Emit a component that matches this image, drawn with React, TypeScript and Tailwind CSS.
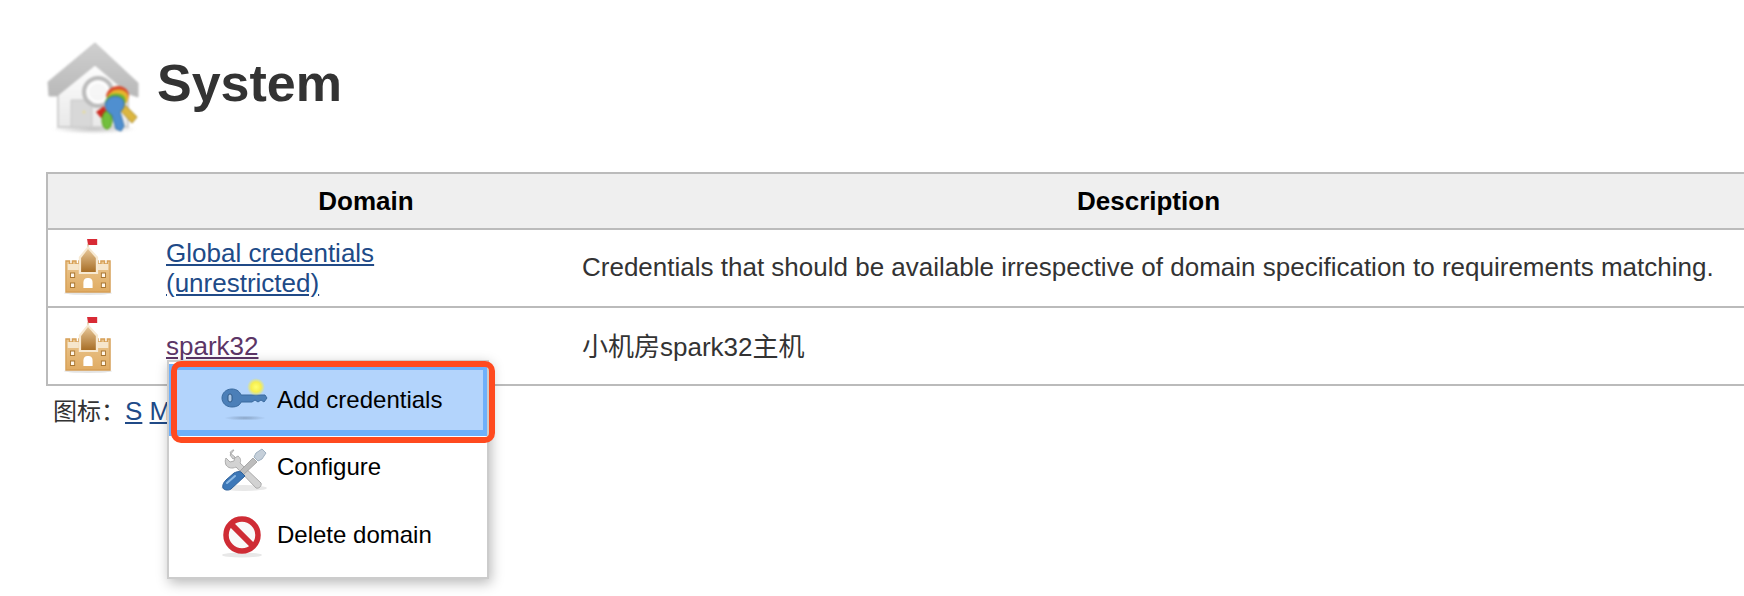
const font = "font-['Liberation_Sans','Noto_Sans_CJK_SC',sans-serif]";

function HouseIcon() {
  return (
    <svg width="100" height="100" viewBox="0 0 100 100" className="shrink-0 blur-[0.8px]">
      <defs>
        <linearGradient id="wall" x1="0" y1="0" x2="0" y2="1">
          <stop offset="0" stopColor="#ffffff" />
          <stop offset="1" stopColor="#e9e9e9" />
        </linearGradient>
        <linearGradient id="roof" x1="0" y1="0" x2="0" y2="1">
          <stop offset="0" stopColor="#cfcfcf" />
          <stop offset="1" stopColor="#b9b9b9" />
        </linearGradient>
        <radialGradient id="shadow">
          <stop offset="0" stopColor="#999" stopOpacity="0.6" />
          <stop offset="1" stopColor="#999" stopOpacity="0" />
        </radialGradient>
      </defs>
      <ellipse cx="50" cy="91" rx="42" ry="5" fill="url(#shadow)" />
      <path d="M14 46 L51 22 L84 46 V89 H14 Z" fill="url(#wall)" stroke="#d0d0d0" strokeWidth="2" />
      <path d="M4 44 L51 5 L94 45 V59 L85 56 L51 27 L13 58 L5 58 Z" fill="url(#roof)" stroke="#bdbdbd" strokeWidth="1" strokeLinejoin="round" />
      <path d="M27 62 H48 V89 H27 Z" fill="#d8d8d8" stroke="#c8c8c8" />
      <circle cx="40" cy="74" r="1.6" fill="#e6dc9e" />
      <circle cx="54" cy="54" r="14" fill="#f6f6f6" fillOpacity="0.6" stroke="#bbbbbb" strokeWidth="4" />
      <circle cx="54" cy="54" r="10" fill="none" stroke="#ffffff" strokeWidth="2" />
      <path d="M52 74 L60 68 L64 76 L57 80 Z" fill="#cc2a20" />
      <path d="M80 66 L93 79 L88 85 L76 72 Z" fill="#dcb63f" stroke="#a88a2a" strokeWidth="1" />
      <ellipse cx="63" cy="82" rx="5" ry="9" fill="#72bf3c" stroke="#4e9a06" strokeWidth="1" />
      <path d="M62 58 C63 49 76 44 83 52 C87 57 84 64 79 66 L66 66 Z" fill="#d94b2e" />
      <path d="M63 60 C65 52 76 48 83 55 C86 60 83 66 79 68 L66 68 Z" fill="#e8b52e" />
      <path d="M61 64 C63 56 72 53 80 58 C83 62 81 68 77 70 L65 72 Z" fill="#6cb92f" />
      <path d="M62 64 C66 56 78 57 80 64 C81 69 78 72 76 74 L80 88 L77 93 L72 91 L68 77 C63 74 60 69 62 64 Z" fill="#4f8fd0" stroke="#336fa8" strokeWidth="1" />
    </svg>
  );
}

function CastleIcon() {
  return (
    <svg width="60" height="60" viewBox="0 0 60 60" className="blur-[0.7px]">
      <defs>
        <linearGradient id="tower" x1="0" y1="0" x2="0" y2="1">
          <stop offset="0" stopColor="#e6c596" />
          <stop offset="1" stopColor="#a86f28" />
        </linearGradient>
        <linearGradient id="body" x1="0" y1="0" x2="0" y2="1">
          <stop offset="0" stopColor="#eac68f" />
          <stop offset="1" stopColor="#e0ab62" />
        </linearGradient>
      </defs>
      <ellipse cx="30" cy="57" rx="24" ry="2" fill="#e4e4e4" />
      <g transform="translate(2.4 0) scale(0.92 1)">
        <path d="M29 3 H40 V9 H30 Z" fill="#d82a35" />
        <path d="M30 8 V12" stroke="#c9a272" strokeWidth="1" />
        <path d="M6 25 H10 V28 H13 V25 H17 V28 H20 V25 H22 V36 H38 V25 H41 V28 H44 V25 H48 V28 H51 V25 H54 V56 H6 Z" fill="url(#body)" stroke="#d69f56" strokeWidth="1.4" />
        <path d="M8 28 H20 V34 H8 Z M40 28 H52 V34 H40 Z" fill="#f6e6cc" />
        <path d="M30 10 L41 21 V38 H20 V21 Z" fill="#f7e9d2" />
        <path d="M30 13 L38.5 22 V36 H22.5 V22 Z" fill="url(#tower)" />
        <path d="M25 52 V47 C25 43 27 42 30 42 C33 42 35 43 35 47 V52 Z" fill="#fff" />
        <rect x="11" y="37" width="4.5" height="4.5" fill="#fff6e8" stroke="#a87530" />
        <rect x="11" y="47" width="4.5" height="4.5" fill="#fff6e8" stroke="#a87530" />
        <rect x="44.5" y="37" width="4.5" height="4.5" fill="#fff6e8" stroke="#a87530" />
        <rect x="44.5" y="47" width="4.5" height="4.5" fill="#fff6e8" stroke="#a87530" />
      </g>
    </svg>
  );
}

function KeyIcon() {
  return (
    <svg width="48" height="48" viewBox="0 0 48 48" className="shrink-0 blur-[0.6px]">
      <defs>
        <radialGradient id="bulb">
          <stop offset="0" stopColor="#ffff70" />
          <stop offset="0.55" stopColor="#f6ee50" />
          <stop offset="1" stopColor="#f6ee50" stopOpacity="0" />
        </radialGradient>
        <radialGradient id="kshadow">
          <stop offset="0" stopColor="#6f86a3" stopOpacity="0.6" />
          <stop offset="1" stopColor="#6f86a3" stopOpacity="0" />
        </radialGradient>
      </defs>
      <ellipse cx="25" cy="42" rx="21" ry="2.5" fill="url(#kshadow)" />
      <path d="M12 13 C17 13 20 16 21 19 H45 L47 22 L44 26 L41 24 L38 26 L35 24 L32 26 L21 26 C20 29 17 31 12 31 C6 31 2 27 2 22 C2 17 6 13 12 13 Z" fill="#4b7fb8" stroke="#3a6a9e" strokeWidth="1" />
      <rect x="8" y="18" width="4" height="8" rx="2" fill="#a9c6e6" stroke="#2f5a88" />
      <circle cx="36" cy="11" r="9" fill="url(#bulb)" />
    </svg>
  );
}

function ConfigureIcon() {
  return (
    <svg width="48" height="52" viewBox="0 0 48 52" className="shrink-0 blur-[0.7px]">
      <g transform="translate(0 6)">
        <ellipse cx="24" cy="41" rx="23" ry="3" fill="#e8e8e8" />
        <path d="M14 3 L10 8 L13 12 L18 9 C21 11 21 14 20 16 L41 36 C42 39 39 42 36 41 L16 20 C12 22 8 21 6 18 C5 15 5 13 6 11 L10 15 L14 14 L15 10 L10 6 C11 4 12 3 14 3 Z" fill="#d2d2d2" stroke="#ababab" strokeWidth="1" strokeLinejoin="round" />
        <path d="M33 11 L37 15 L22 29 L18 26 Z" fill="#bdbdbd" stroke="#9a9a9a" strokeWidth="0.8" />
        <path d="M36 6 L42 2 L46 6 L42 12 L38 14 L34 10 Z" fill="#c5cfd9" stroke="#9fb0c0" strokeWidth="1" />
        <path d="M21 25 L25 29 L11 42 C8 44 4 43 3 41 C2 38 4 35 6 33 L14 26 C16 25 19 24 21 25 Z" fill="#3d78b8" stroke="#2d5f98" strokeWidth="1" />
        <path d="M7 36 L15 29" stroke="#8fbbe6" strokeWidth="2" strokeLinecap="round" />
      </g>
    </svg>
  );
}

function DeleteIcon() {
  return (
    <svg width="48" height="48" viewBox="0 0 48 48" className="shrink-0 blur-[0.7px]">
      <ellipse cx="22" cy="44" rx="20" ry="2.5" fill="#e8e8e8" />
      <circle cx="22" cy="24" r="16" fill="#f9f9f9" stroke="#cf2c35" strokeWidth="5.5" />
      <path d="M11 13 L33 35" stroke="#cf2c35" strokeWidth="6" />
    </svg>
  );
}

function Row({ title, second, visited, description, descClass }: { title: string; second?: string; visited?: boolean; description: string; descClass: string }) {
  return (
    <tr className="h-[78px] border-b-2 border-[#bbbbbb] leading-[30px]">
      <td className="pl-[10px] py-0 align-top">
        <div className="pt-[6px]">
          <CastleIcon />
        </div>
      </td>
      <td className="pl-[5px] py-[8px] align-middle">
        <a className={`underline ${visited ? "text-[#5c3566]" : "text-[#204a87]"}`}>
          {title}
          {second && <br />}
          {second}
        </a>
      </td>
      <td className={`pl-[5px] align-middle whitespace-nowrap text-[#333333] ${descClass}`}>{description}</td>
      <td />
    </tr>
  );
}

function MenuItem({ icon, label, active, className }: { icon: React.ReactNode; label: string; active?: boolean; className: string }) {
  return (
    <div className={`flex items-center gap-[9px] border-[6px] pl-[47px] ${active ? "border-[#6eb0fb] bg-[#b3d4fc]" : "border-transparent"} ${className}`}>
      {icon}
      <span className="text-[24px] leading-[30px] text-black">{label}</span>
    </div>
  );
}

export default function App() {
  return (
    <div className={`relative h-[596px] w-full overflow-hidden bg-white text-[26px] text-[#333333] ${font}`}>
      <div className="flex items-center pl-[44px] pt-[38px]">
        <HouseIcon />
        <h1 className="mb-[10px] ml-[13px] text-[52px] font-bold leading-[60px] text-[#333333]">System</h1>
      </div>

      <table className="ml-[46px] mt-[34px] w-[1800px] table-fixed border-collapse border-2 border-[#bbbbbb]">
        <colgroup>
          <col className="w-[114px]" />
          <col className="w-[416px]" />
          <col className="w-[1150px]" />
          <col />
        </colgroup>
        <thead>
          <tr className="h-[56px] border-b-2 border-[#bbbbbb] bg-[#efefef]">
            <th />
            <th className="pr-[6px] font-bold text-black">Domain</th>
            <th className="pr-[7px] font-bold text-black">Description</th>
            <th />
          </tr>
        </thead>
        <tbody>
          <Row
            title="Global credentials"
            second="(unrestricted)"
            descClass="pb-[2px]"
            description="Credentials that should be available irrespective of domain specification to requirements matching."
          />
          <Row title="spark32" visited descClass="pt-[2px]" description="小机房spark32主机" />
        </tbody>
      </table>

      <div className="ml-[53px] mt-[10px] leading-[30px] whitespace-nowrap">
        <span className="text-[24px]">图标：</span>
        <a className="text-[#204a87] underline">S</a> <a className="text-[#204a87] underline">M</a>
      </div>

      <div className="absolute left-[167px] top-[360px] h-[219px] w-[322px] bg-white shadow-[2px_4px_12px_rgba(0,0,0,0.28)] outline-2 -outline-offset-2 outline-[#cccccc]">
        <div className="flex flex-col pt-[4px]">
          <MenuItem icon={<KeyIcon />} label="Add credentials" active className="h-[72px]" />
          <MenuItem icon={<ConfigureIcon />} label="Configure" className="-mt-[3px] h-[68px]" />
          <MenuItem icon={<DeleteIcon />} label="Delete domain" className="h-[68px]" />
        </div>
      </div>

      <div className="absolute left-[171px] top-[361px] h-[82px] w-[324px] rounded-[10px] border-[6px] border-[#ff4a1f]" />
    </div>
  );
}
